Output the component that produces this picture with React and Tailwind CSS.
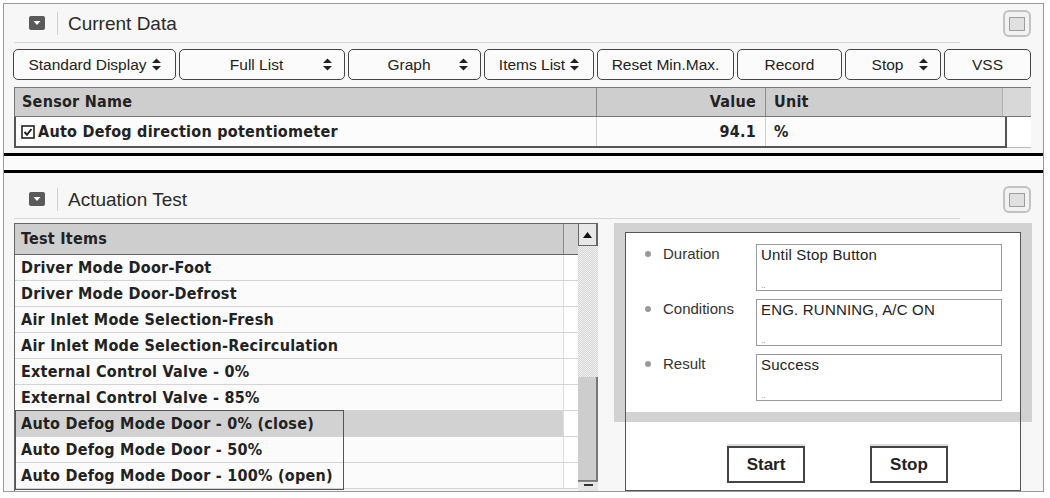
import React from "react";

const BOLD = "font-['DejaVu_Sans_Condensed','DejaVu_Sans',Tahoma,sans-serif] font-bold text-[16px] tracking-[0.25px]";

function SortArrows() {
  return (
    <svg width="9" height="13" viewBox="0 0 9 13" className="shrink-0">
      <polygon points="0,5 4.5,0.5 9,5" fill="#222" />
      <polygon points="0,8 4.5,12.5 9,8" fill="#222" />
    </svg>
  );
}

function CollapseIcon() {
  return (
    <svg width="16" height="14" viewBox="0 0 16 14" className="shrink-0">
      <rect x="0" y="0" width="16" height="14" rx="2" fill="#5a5a5a" />
      <polygon points="4.5,5 11.5,5 8,9" fill="#fff" />
    </svg>
  );
}

function MaxIcon() {
  return (
    <div className="w-[28px] h-[27px] rounded-[6px] border-2 border-[#c2c2c2] bg-[#f2f2f2] flex items-center justify-center shrink-0">
      <div className="w-[16px] h-[14px] border border-[#9c9c9c] bg-[#e0e0e0]" />
    </div>
  );
}

function TitleRow({ title, className }) {
  return (
    <div className={`flex items-center justify-between pr-[12px] ${className}`}>
      <div className="ml-[10px] w-[946px] h-full border-b border-[#d6d6d6] flex items-center pl-[15px]">
        <CollapseIcon />
        <div className="w-px h-[23px] bg-[#d0d0d0] ml-[12px] mr-[10px]" />
        <span className="text-[19px] text-[#2a2a2a] leading-none">{title}</span>
      </div>
      <MaxIcon />
    </div>
  );
}

const TOP_BUTTONS = [
  { label: "Standard Display", w: "w-[163px]", arrow: true, tight: true },
  { label: "Full List", w: "w-[166px]", arrow: true },
  { label: "Graph", w: "w-[133px]", arrow: true },
  { label: "Items List", w: "w-[110px]", arrow: true, tight: true },
  { label: "Reset Min.Max.", w: "w-[137px]" },
  { label: "Record", w: "w-[105px]" },
  { label: "Stop", w: "w-[96px]", arrow: true },
  { label: "VSS", w: "w-[87px]" },
];

const TEST_ITEMS = [
  "Driver Mode Door-Foot",
  "Driver Mode Door-Defrost",
  "Air Inlet Mode Selection-Fresh",
  "Air Inlet Mode Selection-Recirculation",
  "External Control Valve - 0%",
  "External Control Valve - 85%",
  "Auto Defog Mode Door - 0% (close)",
  "Auto Defog Mode Door - 50%",
  "Auto Defog Mode Door - 100% (open)",
];

const FIELDS = [
  { label: "Duration", value: "Until Stop Button" },
  { label: "Conditions", value: "ENG. RUNNING, A/C ON" },
  { label: "Result", value: "Success" },
];

export default function App() {
  return (
    <div className="w-[1050px] h-[498px] bg-white pl-[3px] pt-[3px] font-['Liberation_Sans',Arial,sans-serif] text-[#222]">
      <div className="w-[1041px] h-[489px] border border-[#9a9a9a] bg-[#fafafa] flex flex-col">
        {/* Current Data */}
        <div className="h-[152px] border-b-[3px] border-black bg-[#f7f7f7]">
          <TitleRow title="Current Data" className="h-[39px]" />

          <div className="mt-[6px] ml-[9px] flex gap-[3px]">
            {TOP_BUTTONS.map((b) => (
              <div
                key={b.label}
                className={`${b.w} h-[31px] rounded-[5px] border-[1.5px] border-[#444] bg-[#fbfbfb] flex items-center text-[15.5px] ${
                  b.arrow ? (b.tight ? "justify-center gap-[5px]" : "pl-[10px] pr-[12px]") : "justify-center"
                }`}
              >
                {b.arrow && !b.tight ? (
                  <>
                    <span className="flex-1 text-center">{b.label}</span>
                    <SortArrows />
                  </>
                ) : (
                  <>
                    <span>{b.label}</span>
                    {b.arrow && <SortArrows />}
                  </>
                )}
              </div>
            ))}
          </div>

          <div className="mt-[7px] ml-[10px] w-[1017px]">
            <div className={`h-[30px] flex border-y border-l border-[#777] bg-[#cecece] ${BOLD}`}>
              <div className="w-[582px] border-r border-[#8a8a8a] flex items-center pl-[7px]">Sensor Name</div>
              <div className="w-[169px] border-r border-[#8a8a8a] flex items-center justify-end pr-[9px]">Value</div>
              <div className="w-[237px] border-r border-[#b0b0b0] flex items-center pl-[8px]">Unit</div>
              <div className="flex-1 bg-[#d8d8d8]" />
            </div>
            <div className={`h-[31px] flex ${BOLD}`}>
              <div className="w-[993px] flex border-x-2 border-b-2 border-[#555] bg-[#fcfcfc]">
                <div className="w-[581px] border-r border-[#d0d0d0] flex items-center pl-[5px] gap-[3px]">
                  <svg width="14" height="14" viewBox="0 0 14 14" className="shrink-0">
                    <rect x="1" y="1" width="12" height="12" fill="#fff" stroke="#222" strokeWidth="1.6" />
                    <polyline points="3.5,7 6,9.8 10.5,4" fill="none" stroke="#222" strokeWidth="2" />
                  </svg>
                  <span>Auto Defog direction potentiometer</span>
                </div>
                <div className="w-[169px] border-r border-[#d0d0d0] flex items-center justify-end pr-[9px]">94.1</div>
                <div className="flex-1 flex items-center pl-[8px]">%</div>
              </div>
              <div className="flex-1 bg-white border-b border-[#bbb]" />
            </div>
          </div>
        </div>

        <div className="h-[14px] bg-[#fbfbfb]" />

        {/* Actuation Test */}
        <div className="flex-1 border-t-[3px] border-black bg-[#f7f7f7] flex flex-col">
          <TitleRow title="Actuation Test" className="h-[46px] pt-[7px]" />

          <div className="mt-[4px] flex-1 flex ml-[10px] gap-[16px] min-h-0">
            {/* Test items list */}
            <div className="w-[584px] h-full flex relative overflow-hidden">
              <div className="w-[564px] flex flex-col border-l border-[#666]">
                <div className={`h-[32px] flex border-y border-[#666] bg-[#cecece] ${BOLD}`}>
                  <div className="flex-1 border-r border-[#8a8a8a] flex items-center pl-[6px]">Test Items</div>
                  <div className="w-[14px] bg-[#d4d4d4]" />
                </div>
                {TEST_ITEMS.map((item, i) => (
                  <div key={item} className={`h-[26px] shrink-0 flex border-b border-[#d4d4d4] ${BOLD}`}>
                    <div
                      className={`flex-1 flex items-center pl-[6px] border-r border-[#dcdcdc] ${
                        i === 6 ? "bg-[#d2d2d2]" : "bg-[#fbfbfb]"
                      }`}
                    >
                      {item}
                    </div>
                    <div className="w-[14px] bg-white" />
                  </div>
                ))}
              </div>
              <div className="w-[20px] flex flex-col">
                <div className="h-[23px] shrink-0 border border-[#666] border-r-2 bg-[#e8e8e8] flex items-center justify-center">
                  <svg width="9" height="6" viewBox="0 0 9 6">
                    <polygon points="0,6 4.5,0 9,6" fill="#111" />
                  </svg>
                </div>
                <div className="h-[131px] shrink-0 bg-[repeating-conic-gradient(#d6d6d6_0_25%,#f0f0f0_0_50%)] bg-[length:2px_2px]" />
                <div className="h-[104px] shrink-0 bg-[#cdcdcd] border-r-2 border-b border-[#777]" />
                <div className="flex-1 bg-[#e6e6e6] border-t border-[#888] flex justify-center pt-[2px]">
                  <div className="w-[9px] h-[2px] bg-[#333]" />
                </div>
              </div>
              <div className="absolute left-px top-[187px] w-[329px] h-[80px] border-[1.5px] border-[#555] pointer-events-none" />
            </div>

            {/* Detail panel */}
            <div className="w-[418px] h-full flex flex-col">
              <div className="bg-[#d2d2d2] px-[11px] pt-[9px]">
                <div className="h-[180px] bg-white border-x border-t border-[#555] pt-[11px] flex flex-col gap-[8px]">
                  {FIELDS.map((f) => (
                    <div key={f.label} className="h-[47px] flex">
                      <div className="w-[130px] flex items-start pl-[19px] text-[15px] text-[#333]">
                        <span className="w-[6px] h-[6px] rounded-full bg-[#9a9a9a] mt-[7px] mr-[12px] shrink-0" />
                        <span className="leading-[20px]">{f.label}</span>
                      </div>
                      <div className="w-[246px] border border-[#9a9a9a] bg-white flex flex-col justify-between pl-[4px]">
                        <span className="text-[15px] leading-[20px] tracking-[0.2px]">{f.value}</span>
                        <span className="text-[8px] leading-none text-[#777]">..</span>
                      </div>
                    </div>
                  ))}
                </div>
                <div className="h-[10px] border-x border-[#555]" />
              </div>
              <div className="flex-1 mx-[11px] border-x border-b border-[#555] bg-white flex items-start pt-[24px] pl-[101px] gap-[65px]">
                <div className="w-[78px] h-[37px] border-2 border-[#444] bg-white shadow-[0_-2px_0_#ddd] flex items-center justify-center text-[17px] font-bold">
                  Start
                </div>
                <div className="w-[78px] h-[37px] border-2 border-[#444] bg-white shadow-[0_-2px_0_#ddd] flex items-center justify-center text-[17px] font-bold">
                  Stop
                </div>
              </div>
            </div>
          </div>
        </div>
      </div>
    </div>
  );
}
